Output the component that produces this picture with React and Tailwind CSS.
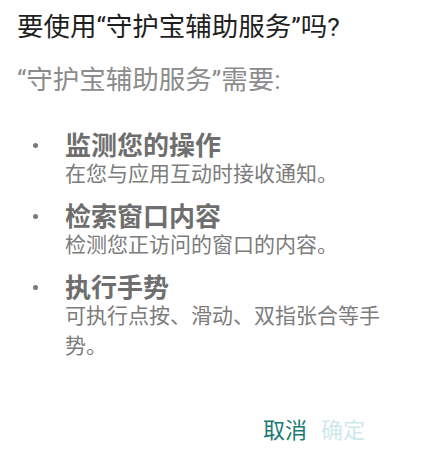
const items = [
  { title: "监测您的操作", desc: "在您与应用互动时接收通知。" },
  { title: "检索窗口内容", desc: "检测您正访问的窗口的内容。" },
  { title: "执行手势", desc: "可执行点按、滑动、双指张合等手势。" },
];

export default function App() {
  return (
    <div
      className="w-[427px] h-[457px] bg-white flex flex-col overflow-hidden"
      style={{ fontFamily: 'Roboto, "Noto Sans CJK SC", sans-serif' }}
    >
      <div className="pl-[17px] pr-[24px] pt-[12px]">
        <h1 className="text-[26.5px] leading-[30px] text-[#1f1f1f]">
          要使用“守护宝辅助服务”吗?
        </h1>
        <p className="mt-[23px] text-[26.5px] leading-[30px] text-[#8c8c8c]">
          “守护宝辅助服务”需要:
        </p>
      </div>

      <ul className="mt-[39px] pr-[40px] flex flex-col gap-[16px]">
        {items.map((item) => (
          <li key={item.title} className="flex">
            <div className="w-[65px] shrink-0 flex justify-center pl-[5px] pt-[9px]">
              <span className="w-[5px] h-[5px] rounded-full bg-[#7a7a7a]" />
            </div>
            <div className="flex flex-col">
              <span className="text-[26px] leading-[25px] font-bold text-[#6e6e6e]">
                {item.title}
              </span>
              <span className="text-[21px] leading-[30px] text-[#7c7c7c]">
                {item.desc}
              </span>
            </div>
          </li>
        ))}
      </ul>

      <div className="mt-auto mb-[12px] pl-[263px] flex gap-[14px] text-[22px] leading-[28px]">
        <span className="text-[#1b7a70]">取消</span>
        <span className="text-[#cfe8ec]">确定</span>
      </div>
    </div>
  );
}
